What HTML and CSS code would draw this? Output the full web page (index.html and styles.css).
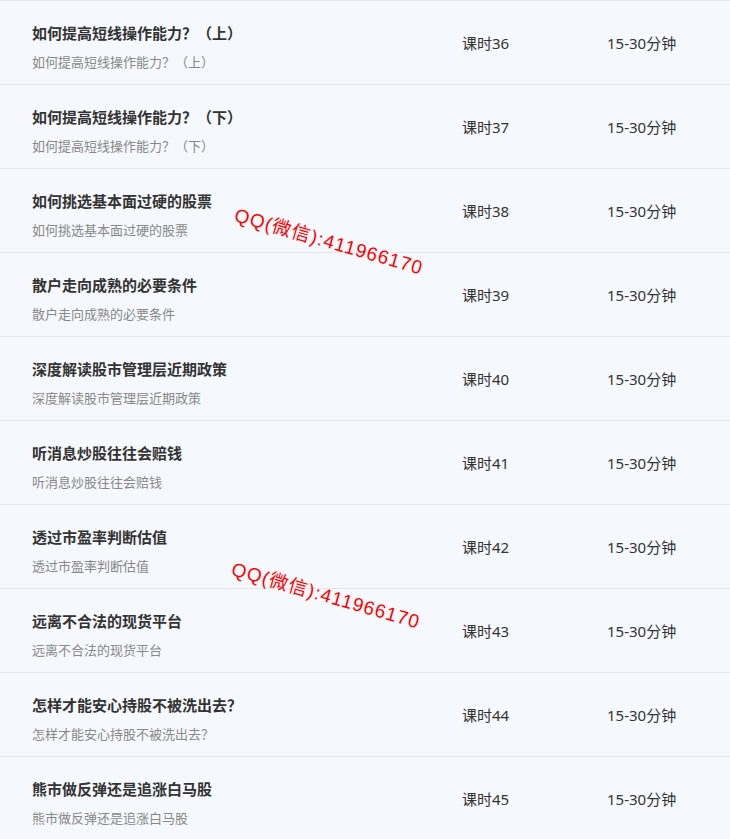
FILE: index.html
```html
<!DOCTYPE html>
<html lang="zh-CN">
<head>
    <meta charset="UTF-8">
    <meta name="viewport" content="width=device-width, initial-scale=1.0">
    <title>课程目录</title>
    <link rel="stylesheet" href="styles.css">
</head>
<body>
    <div class="lesson-list">
        <div class="lesson">
            <div class="lesson-info">
                <div class="lesson-title">如何提高短线操作能力？（上）</div>
                <div class="lesson-desc">如何提高短线操作能力？（上）</div>
            </div>
            <div class="lesson-num">课时36</div>
            <div class="lesson-time">15-30分钟</div>
        </div>
        <div class="lesson">
            <div class="lesson-info">
                <div class="lesson-title">如何提高短线操作能力？（下）</div>
                <div class="lesson-desc">如何提高短线操作能力？（下）</div>
            </div>
            <div class="lesson-num">课时37</div>
            <div class="lesson-time">15-30分钟</div>
        </div>
        <div class="lesson">
            <div class="lesson-info">
                <div class="lesson-title">如何挑选基本面过硬的股票</div>
                <div class="lesson-desc">如何挑选基本面过硬的股票</div>
            </div>
            <div class="lesson-num">课时38</div>
            <div class="lesson-time">15-30分钟</div>
        </div>
        <div class="lesson">
            <div class="lesson-info">
                <div class="lesson-title">散户走向成熟的必要条件</div>
                <div class="lesson-desc">散户走向成熟的必要条件</div>
            </div>
            <div class="lesson-num">课时39</div>
            <div class="lesson-time">15-30分钟</div>
        </div>
        <div class="lesson">
            <div class="lesson-info">
                <div class="lesson-title">深度解读股市管理层近期政策</div>
                <div class="lesson-desc">深度解读股市管理层近期政策</div>
            </div>
            <div class="lesson-num">课时40</div>
            <div class="lesson-time">15-30分钟</div>
        </div>
        <div class="lesson">
            <div class="lesson-info">
                <div class="lesson-title">听消息炒股往往会赔钱</div>
                <div class="lesson-desc">听消息炒股往往会赔钱</div>
            </div>
            <div class="lesson-num">课时41</div>
            <div class="lesson-time">15-30分钟</div>
        </div>
        <div class="lesson">
            <div class="lesson-info">
                <div class="lesson-title">透过市盈率判断估值</div>
                <div class="lesson-desc">透过市盈率判断估值</div>
            </div>
            <div class="lesson-num">课时42</div>
            <div class="lesson-time">15-30分钟</div>
        </div>
        <div class="lesson">
            <div class="lesson-info">
                <div class="lesson-title">远离不合法的现货平台</div>
                <div class="lesson-desc">远离不合法的现货平台</div>
            </div>
            <div class="lesson-num">课时43</div>
            <div class="lesson-time">15-30分钟</div>
        </div>
        <div class="lesson">
            <div class="lesson-info">
                <div class="lesson-title">怎样才能安心持股不被洗出去？</div>
                <div class="lesson-desc">怎样才能安心持股不被洗出去？</div>
            </div>
            <div class="lesson-num">课时44</div>
            <div class="lesson-time">15-30分钟</div>
        </div>
        <div class="lesson">
            <div class="lesson-info">
                <div class="lesson-title">熊市做反弹还是追涨白马股</div>
                <div class="lesson-desc">熊市做反弹还是追涨白马股</div>
            </div>
            <div class="lesson-num">课时45</div>
            <div class="lesson-time">15-30分钟</div>
        </div>

        <div class="watermark watermark-top">QQ(微信):411966170</div>
        <div class="watermark watermark-bottom">QQ(微信):411966170</div>
    </div>
</body>
</html>
```

FILE: styles.css
```css
:root {
    --bg: #f5f8fc;
    --line: #e3e5e9;
    --text-main: #333333;
    --text-sub: #888888;
}

body {
    margin: 0;
    padding: 0;
    background-color: var(--bg);
    font-family: "Noto Sans CJK SC", "Noto Sans", sans-serif;
    color: var(--text-main);
    overflow: hidden;
}

.lesson-list {
    position: relative;
}

.lesson {
    display: grid;
    grid-template-columns: 430px 145px 1fr;
    align-items: center;
    height: 83px;
    padding-left: 32px;
    border-top: 1px solid var(--line);
}

.lesson-info {
    align-self: start;
    display: flex;
    flex-direction: column;
    gap: 10px;
    padding-top: 22px;
}

.lesson-title {
    font-size: 15px;
    font-weight: 700;
    line-height: 20px;
    color: var(--text-main);
}

.lesson-desc {
    font-size: 13px;
    line-height: 18px;
    color: var(--text-sub);
}

.lesson-num,
.lesson-time {
    font-family: "Noto Sans", "Noto Sans CJK SC", sans-serif;
    font-size: 15px;
    line-height: 20px;
    color: var(--text-main);
}

/* watermark stamped over the list */
.watermark {
    position: absolute;
    font-family: "Liberation Sans", "Noto Sans CJK SC", sans-serif;
    font-size: 19px;
    line-height: 20px;
    letter-spacing: 1px;
    color: #ff0000;
    white-space: nowrap;
    transform: rotate(16deg);
    transform-origin: 0 50%;
}

.watermark-top {
    left: 235px;
    top: 205px;
}

.watermark-bottom {
    left: 232px;
    top: 559px;
}
```
